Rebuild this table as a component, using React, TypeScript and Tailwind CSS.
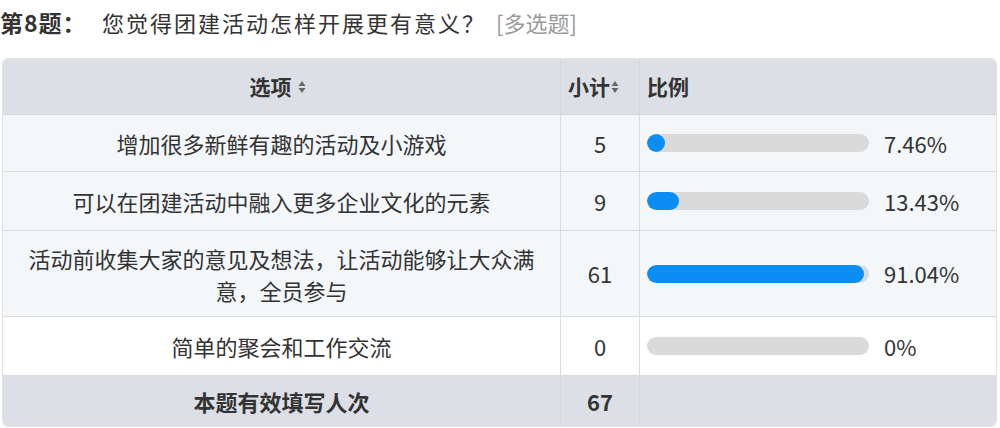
import React from "react";

const FONT = '"Noto Sans CJK SC", "Noto Sans", sans-serif';

function SortIcon() {
  return (
    <svg width="8" height="14" viewBox="0 0 8 14" className="inline-block">
      <path d="M4 1 L7.5 6 L0.5 6 Z" fill="#666" />
      <path d="M4 13 L7.5 8 L0.5 8 Z" fill="#666" />
    </svg>
  );
}

function Bar({ pct }: { pct: number }) {
  return (
    <div className="h-[18px] w-[222px] rounded-full bg-[#dadada] overflow-hidden shrink-0">
      {pct > 0 && (
        <div
          className="h-full rounded-full bg-[#0a8ef6] min-w-[18px]"
          style={{ width: `${Math.min(pct * 2.38, 217)}px` }}
        />
      )}
    </div>
  );
}

const rows = [
  { text: "增加很多新鲜有趣的活动及小游戏", n: "5", pct: 7.46, label: "7.46%", h: "h-[57px]", bg: "bg-[#f4f7fa]" },
  { text: "可以在团建活动中融入更多企业文化的元素", n: "9", pct: 13.43, label: "13.43%", h: "h-[59px]", bg: "bg-[#f4f7fa]" },
  { text: "活动前收集大家的意见及想法，让活动能够让大众满意，全员参与", n: "61", pct: 91.04, label: "91.04%", h: "h-[86px]", bg: "bg-[#f4f7fa]" },
  { text: "简单的聚会和工作交流", n: "0", pct: 0, label: "0%", h: "h-[59px]", bg: "bg-white" },
];

export default function App() {
  return (
    <div className="w-[1000px] h-[428px] bg-white overflow-hidden text-[#333]" style={{ fontFamily: FONT }}>
      <div className="h-[44px] flex items-center">
        <span className="text-[23px] font-bold text-[#333] w-[102px] shrink-0 tracking-[1px]">第8题：</span>
        <span className="text-[22px] text-[#333] tracking-[2px]">您觉得团建活动怎样开展更有意义？</span>
        <span className="ml-[10px] text-[22px] text-[#999]">[多选题]</span>
      </div>
      <div className="mt-[14px] ml-[2px] w-[995px] border border-[#e2e2e2] rounded-[6px] overflow-hidden">
        <div className="grid grid-cols-[558px_79px_1fr] h-[56px] bg-[#dcdfe6] border-b border-[#d4d6da]">
          <div className="flex items-center justify-center gap-[6px] pr-[8px] border-r border-[#d4d6da] text-[21px] font-bold">
            <span>选项</span>
            <SortIcon />
          </div>
          <div className="flex items-center pl-[7px] gap-[1px] border-r border-[#d4d6da] text-[21px] font-bold">
            <span>小计</span>
            <SortIcon />
          </div>
          <div className="flex items-center pl-[7px] text-[21px] font-bold">比例</div>
        </div>
        {rows.map((r) => (
          <div key={r.n} className={`grid grid-cols-[558px_79px_1fr] ${r.h} ${r.bg} border-b border-[#dcdcdc]`}>
            <div className="flex items-center justify-center px-[20px] text-center text-[22px] leading-[32px] border-r border-[#dcdcdc]">
              {r.text}
            </div>
            <div className="flex items-center justify-center text-[22px] border-r border-[#dcdcdc]">{r.n}</div>
            <div className="flex items-center pl-[7px] gap-[15px]">
              <Bar pct={r.pct} />
              <span className="text-[22px]">{r.label}</span>
            </div>
          </div>
        ))}
        <div className="grid grid-cols-[558px_79px_1fr] h-[50px] bg-[#dcdfe6]">
          <div className="flex items-center justify-center border-r border-[#d4d6da] text-[22px] font-bold">本题有效填写人次</div>
          <div className="flex items-center justify-center border-r border-[#d4d6da] text-[22px] font-bold">67</div>
          <div />
        </div>
      </div>
    </div>
  );
}
